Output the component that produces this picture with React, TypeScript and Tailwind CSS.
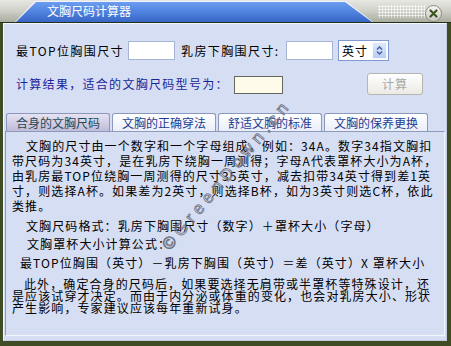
import React from "react";

const font = "font-['Noto_Sans_CJK_SC','Noto_Sans',sans-serif]";

function Spin() {
  return (
    <div className="ml-auto mr-[1px] w-[15px] h-[17px] bg-gradient-to-b from-[#dfe9fb] to-[#b9cdf2] border border-[#f6f9ff] flex items-center justify-center">
      <svg width="7" height="9" viewBox="0 0 7 9">
        <path d="M1 3.5 L3.5 1 L6 3.5 M1 5.5 L3.5 8 L6 5.5" fill="none" stroke="#3d5fa6" strokeWidth="1.4" />
      </svg>
    </div>
  );
}

export default function App() {
  const tabs = ["合身的文胸尺码", "文胸的正确穿法", "舒适文胸的标准", "文胸的保养更换"];

  return (
    <div className={`${font} relative w-[451px] h-[346px] overflow-hidden bg-[#3f4c24] flex flex-col text-[12px] text-black`}>
      {/* title bar */}
      <div className="relative h-[22px] shrink-0 flex items-center bg-gradient-to-b from-[#e8e8e2] via-[#cfd0c8] to-[#a9ac9f]">
        <div className="absolute left-[15px] top-[1px] bottom-0 w-[358px] bg-[#eef3ff] [clip-path:polygon(20px_0,331px_0,358px_100%,0_100%)]" />
        <div className="absolute left-[16px] top-[2px] bottom-0 w-[356px] bg-gradient-to-b from-[#6c9df0] via-[#4f82de] to-[#3866c6] [clip-path:polygon(20px_0,329px_0,356px_100%,0_100%)]" />
        <span className="relative ml-[47px] text-white leading-none">文胸尺码计算器</span>
        <div className="absolute left-[378px] top-[5px] w-[47px] h-[13px] bg-[radial-gradient(circle,#ffffff_0.9px,transparent_1.1px)] bg-[length:3px_3px]" />
        <div className="absolute left-[425px] top-[5px] w-[17px] h-[17px] rounded-full border border-[#8d8f84] bg-gradient-to-b from-[#f7f7f3] to-[#c6c7bd] flex items-center justify-center">
          <svg width="9" height="9" viewBox="0 0 9 9">
            <path d="M1.5 1.5 L7.5 7.5 M7.5 1.5 L1.5 7.5" stroke="#3b5420" strokeWidth="2.2" strokeLinecap="round" />
          </svg>
        </div>
      </div>
      <div className="h-px shrink-0 bg-[#23301a]" />

      {/* body */}
      <div className="flex-1 ml-[3px] mr-[4px] mb-[5px] flex flex-col bg-[#d6def3] border border-[#f3f6fd] border-r-[#c3cce4] border-b-[#c3cce4]">
        {/* row 1 */}
        <div className="mt-[16px] h-[21px] px-[12px] flex items-center tracking-[1.4px]">
          <span className="w-[112px] whitespace-nowrap">最TOP位胸围尺寸</span>
          <div className="w-[47px] h-[19px] bg-white border border-[#a7b5d5]" />
          <span className="ml-[6px] w-[105px] whitespace-nowrap">乳房下胸围尺寸:</span>
          <div className="w-[47px] h-[19px] bg-white border border-[#a7b5d5]" />
          <div className="ml-[5px] w-[51px] h-[21px] bg-white border border-[#7f9ad0] flex items-center">
            <span className="pl-[3px] tracking-[1px]">英寸</span>
            <Spin />
          </div>
        </div>

        {/* row 2 */}
        <div className="mt-[12px] h-[22px] px-[12px] flex items-center">
          <span className="w-[218px] whitespace-nowrap text-[#1b259a] tracking-[1.3px]">计算结果，适合的文胸尺码型号为：</span>
          <div className="mt-[1px] w-[49px] h-[18px] bg-[#fffbea] border border-[#666660]" />
          <button className="ml-[84px] w-[56px] h-[22px] rounded-[3px] border border-[#b6b6b0] bg-gradient-to-b from-white to-[#ebeae4] text-[#a9a9a6] tracking-[1px]">
            计算
          </button>
        </div>

        {/* tabs */}
        <div className="mt-[18px] h-[18px] pl-[2px] flex gap-[2px] items-end">
          {tabs.map((t, i) => (
            <div
              key={t}
              className={
                i === 0
                  ? "w-[104px] h-[18px] rounded-t-[3px] border border-b-0 border-[#8c98bb] bg-gradient-to-b from-[#e6e3f2] to-[#bfbbd9] text-[#1d4a57] flex items-center justify-center leading-none"
                  : "w-[104px] h-[18px] rounded-t-[3px] border border-b-0 border-[#8c98bb] bg-gradient-to-b from-white to-[#e9eef9] text-[#1e3d92] flex items-center justify-center leading-none"
              }
            >
              {t}
            </div>
          ))}
        </div>

        {/* text panel */}
        <div className="flex-1 mx-[1px] mb-[4px] border border-[#8e9abb] border-r-[#f3f6fd] border-b-[#f3f6fd] pt-[6px] pl-[6px] text-[12px] tracking-[1.1px] whitespace-nowrap">
          <div className="leading-[15px]">
            <p className="pl-[14px]">文胸的尺寸由一个数字和一个字母组成，例如：34A。数字34指文胸扣</p>
            <p>带尺码为34英寸，是在乳房下绕胸一周测得；字母A代表罩杯大小为A杯，</p>
            <p>由乳房最TOP位绕胸一周测得的尺寸35英寸，减去扣带34英寸得到差1英</p>
            <p>寸，则选择A杯。如果差为2英寸，则选择B杯，如为3英寸则选C杯，依此</p>
            <p>类推。</p>
            <p className="mt-[5px] pl-[14px]">文胸尺码格式：乳房下胸围尺寸（数字）＋罩杯大小（字母）</p>
            <p className="mt-[3px] pl-[15px]">文胸罩杯大小计算公式：</p>
            <p className="mt-[4px] pl-[8px]">最TOP位胸围（英寸）－乳房下胸围（英寸）＝差（英寸）X 罩杯大小</p>
          </div>
          <div className="mt-[8px] leading-[12px]">
            <p className="pl-[12px]">此外，确定合身的尺码后，如果要选择无肩带或半罩杯等特殊设计，还</p>
            <p>是应该试穿才决定。而由于内分泌或体重的变化，也会对乳房大小、形状</p>
            <p>产生影响，专家建议应该每年重新试身。</p>
          </div>
        </div>
      </div>

      {/* watermark */}
      <div className="pointer-events-none absolute left-[122px] top-[162px] w-[210px] text-center -rotate-[50deg] font-['Liberation_Sans',sans-serif] text-[17px] tracking-[5px] text-transparent [-webkit-text-stroke:0.8px_#6f7484]">
        ©GreenDown.cn
      </div>
    </div>
  );
}
